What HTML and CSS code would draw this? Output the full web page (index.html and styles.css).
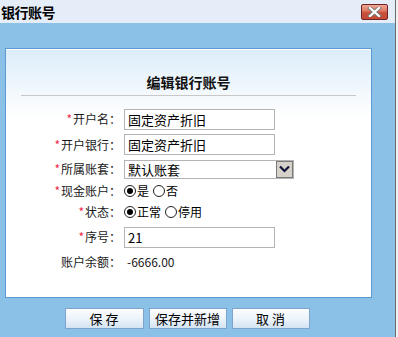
FILE: index.html
```html
<!DOCTYPE html>
<html lang="zh">
<head>
<meta charset="utf-8">
<title>银行账号</title>
<link rel="stylesheet" href="styles.css">
</head>
<body>
<div class="screen">
  <div class="window">
    <div class="titlebar">
      <span class="title">银行账号</span>
      <span class="close">
        <svg width="15" height="10" viewBox="0 0 15 10">
          <path d="M3 1 L12 9 M12 1 L3 9" stroke="#7a7a7a" stroke-width="4" stroke-linecap="square"/>
          <path d="M3 1 L12 9 M12 1 L3 9" stroke="#ffffff" stroke-width="2.2" stroke-linecap="square"/>
        </svg>
      </span>
    </div>
    <div class="content">
      <div class="panel">
        <div class="heading">编辑银行账号</div>
        <div class="rule"></div>
        <div class="form">
          <div class="row r1">
            <div class="label"><span class="req">*</span>开户名：</div>
            <div class="field"><div class="input">固定资产折旧</div></div>
          </div>
          <div class="row r2">
            <div class="label"><span class="req">*</span>开户银行：</div>
            <div class="field"><div class="input">固定资产折旧</div></div>
          </div>
          <div class="row r3">
            <div class="label"><span class="req">*</span>所属账套：</div>
            <div class="field">
              <div class="select">
                <span class="select-text">默认账套</span>
                <span class="select-btn">
                  <svg width="11" height="8" viewBox="0 0 11 8">
                    <path d="M1 1.5 L5.5 6 L10 1.5" fill="none" stroke="#10143a" stroke-width="2.2"/>
                  </svg>
                </span>
              </div>
            </div>
          </div>
          <div class="row r4">
            <div class="label"><span class="req">*</span>现金账户：</div>
            <div class="field radios">
              <span class="radio on"></span><span class="rtext">是</span>
              <span class="radio"></span><span class="rtext">否</span>
            </div>
          </div>
          <div class="row r5">
            <div class="label"><span class="req">*</span>状态：</div>
            <div class="field radios">
              <span class="radio on"></span><span class="rtext">正常</span>
              <span class="radio"></span><span class="rtext">停用</span>
            </div>
          </div>
          <div class="row r6">
            <div class="label"><span class="req">*</span>序号：</div>
            <div class="field"><div class="input">21</div></div>
          </div>
          <div class="row r7">
            <div class="label">账户余额：</div>
            <div class="field value">-6666.00</div>
          </div>
        </div>
      </div>
      <div class="buttons">
        <span class="btn b1">保 存</span>
        <span class="btn b2">保存并新增</span>
        <span class="btn b3">取 消</span>
      </div>
    </div>
  </div>
  <div class="edge"></div>
</div>
</body>
</html>
```
FILE: styles.css
```css
html, body {
  margin: 0;
  padding: 0;
}
body {
  width: 398px;
  height: 337px;
  overflow: hidden;
  font-family: "Noto Sans CJK SC", "Liberation Sans", sans-serif;
  color: #000;
}
.screen {
  display: flex;
  width: 398px;
  height: 337px;
}
.window {
  width: 395px;
  height: 337px;
  display: flex;
  flex-direction: column;
}
.edge {
  width: 2px;
  height: 337px;
  border-left: 1px solid #6a6a6a;
  background: #f2f2f2;
}
.titlebar {
  height: 23px;
  background: #e5eef8;
  display: flex;
  align-items: center;
  justify-content: space-between;
  padding: 0 7px 0 1px;
}
.title {
  font-size: 14px;
  font-weight: bold;
  line-height: 16px;
  letter-spacing: -0.5px;
}
.close {
  width: 25px;
  height: 14px;
  border: 1px solid #6e2424;
  border-radius: 2px;
  background: linear-gradient(#f0a896 0%, #e07c66 40%, #c9503a 55%, #c44a34 100%);
  display: flex;
  align-items: center;
  justify-content: center;
}
.close svg { display: block; }
.content {
  flex: 1;
  background: #8bc1e6;
  padding: 25px 23px 0 5px;
}
.panel {
  height: 248px;
  border: 1px solid #5d9ad4;
  box-shadow: inset 0 1px 0 #ffffff;
  background: linear-gradient(#dcedf9 0px, #f3f9fd 45px, #ffffff 70px);
}
.heading {
  margin-top: 23px;
  height: 20px;
  line-height: 20px;
  text-align: center;
  font-size: 14px;
  font-weight: bold;
  color: #111;
}
.rule {
  height: 1px;
  margin: 3px 15px 0 15px;
  background: #c8c8c8;
}
.form {
  margin-top: 10px;
}
.row {
  display: flex;
  align-items: center;
}
.r1 { height: 26px; }
.r2 { height: 25px; }
.r3 { height: 24px; }
.r4 { height: 20px; }
.r5 { height: 21px; }
.r6 { height: 30px; }
.r7 { height: 20px; }
.label {
  width: 115px;
  text-align: right;
  font-size: 12px;
  line-height: 16px;
  color: #1a1a1a;
  white-space: nowrap;
}
.req {
  color: #f0284a;
  margin-right: 1px;
}
.field {
  margin-left: 3px;
  display: flex;
  align-items: center;
}
.input {
  width: 146px;
  height: 19px;
  border: 1px solid #b4b4b4;
  background: #fff;
  font-size: 13px;
  line-height: 19px;
  padding-left: 3px;
}
.select {
  width: 168px;
  height: 17px;
  border: 1px solid #b4b4b4;
  background: #fff;
  display: flex;
  justify-content: space-between;
  align-items: stretch;
}
.select-text {
  font-size: 13px;
  line-height: 17px;
  padding-left: 3px;
}
.select-btn {
  width: 15px;
  border: 1px solid #7a7a7a;
  background: #d6d2ca;
  display: flex;
  align-items: center;
  justify-content: center;
}
.radio {
  width: 10px;
  height: 10px;
  border: 1px solid #222;
  border-radius: 50%;
  background: #fff;
  display: inline-flex;
  align-items: center;
  justify-content: center;
}
.radio.on::after {
  content: "";
  width: 6px;
  height: 6px;
  border-radius: 50%;
  background: #000;
}
.rtext {
  font-size: 12px;
  line-height: 16px;
  margin: 0 4px 0 1px;
}
.value {
  font-size: 12px;
  line-height: 16px;
  padding-left: 3px;
  color: #1a1a1a;
}
.buttons {
  margin-top: 10px;
  width: 364px;
  display: flex;
  justify-content: center;
  gap: 5px;
}
.btn {
  height: 19px;
  border: 1px solid #7fa3cf;
  background: linear-gradient(#fbfdff 0%, #eef4fb 50%, #d3e3f3 100%);
  font-size: 13px;
  line-height: 19px;
  text-align: center;
  color: #000;
}
.b1 { width: 77px; }
.b2 { width: 76px; }
.b3 { width: 76px; }
```
